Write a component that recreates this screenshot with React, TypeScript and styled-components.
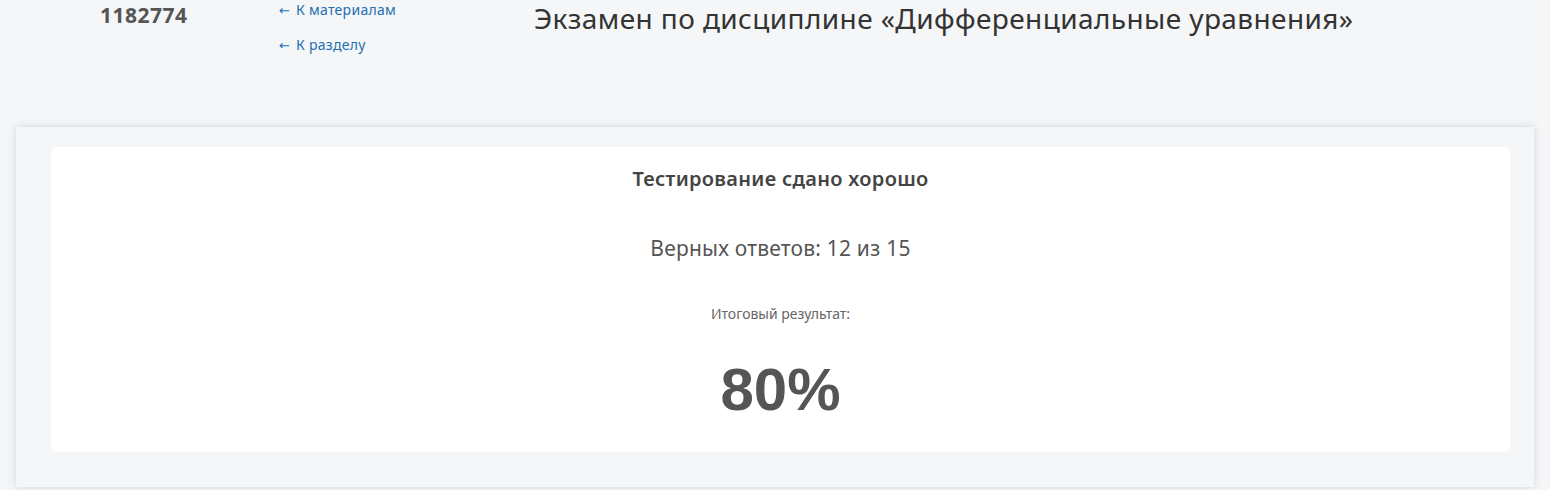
import React from "react";
import styled, { createGlobalStyle } from "styled-components";

const GlobalStyle = createGlobalStyle`
  html, body {
    margin: 0;
    padding: 0;
    background: #f5f6f8;
    font-family: "Noto Sans", "Open Sans", sans-serif;
    color: #444;
  }
`;

const Page = styled.div`
  width: 1550px;
  height: 490px;
  overflow: hidden;
`;

const Header = styled.header`
  display: flex;
  align-items: flex-start;
  padding-left: 100px;
  height: 127px;
`;

const TestId = styled.div`
  width: 179px;
  font-size: 21px;
  font-weight: 700;
  letter-spacing: 0.5px;
  color: #555;
  line-height: 30px;
`;

const Links = styled.nav`
  width: 255px;
  display: flex;
  flex-direction: column;
  gap: 16px;
  padding-top: 1px;
`;

const BackLink = styled.a`
  font-size: 14px;
  line-height: 18px;
  letter-spacing: 0.3px;
  color: #1f6fb2;
  text-decoration: none;
  cursor: pointer;
`;

const Arrow = styled.span`
  font-family: "DejaVu Sans", sans-serif;
  font-size: 13px;
  letter-spacing: 0;
  margin-right: 6px;
`;

const Title = styled.h1`
  margin: 0;
  padding-top: 0;
  font-size: 28px;
  font-weight: 400;
  letter-spacing: 0.4px;
  line-height: 36px;
  color: #333;
`;

const Panel = styled.section`
  margin: 0 16px;
  height: 360px;
  padding: 20px 24px 35px 35px;
  box-sizing: border-box;
  background: #f5f6f8;
  box-shadow: 0 0 8px rgba(40, 50, 70, 0.16);
`;

const ResultCard = styled.div`
  height: 305px;
  background: #fff;
  border-radius: 6px;
  display: flex;
  flex-direction: column;
  align-items: center;
  text-align: center;
`;

const Verdict = styled.div`
  margin-top: 19px;
  font-size: 20px;
  font-weight: 600;
  letter-spacing: 0.3px;
  line-height: 26px;
  color: #444;
`;

const Score = styled.div`
  margin-top: 42px;
  font-size: 21px;
  letter-spacing: 0.2px;
  line-height: 28px;
  color: #555;
`;

const Caption = styled.div`
  margin-top: 43px;
  font-size: 14px;
  line-height: 18px;
  color: #666;
`;

const Percent = styled.div`
  margin-top: 32px;
  font-family: "Liberation Sans", Arial, sans-serif;
  font-size: 60px;
  font-weight: 700;
  line-height: 70px;
  color: #555;
`;

export default function App() {
  return (
    <>
      <GlobalStyle />
      <Page>
        <Header>
          <TestId>1182774</TestId>
          <Links>
            <BackLink>
              <Arrow>←</Arrow>К материалам
            </BackLink>
            <BackLink>
              <Arrow>←</Arrow>К разделу
            </BackLink>
          </Links>
          <Title>Экзамен по дисциплине «Дифференциальные уравнения»</Title>
        </Header>
        <Panel>
          <ResultCard>
            <Verdict>Тестирование сдано хорошо</Verdict>
            <Score>Верных ответов: 12 из 15</Score>
            <Caption>Итоговый результат:</Caption>
            <Percent>80%</Percent>
          </ResultCard>
        </Panel>
      </Page>
    </>
  );
}
